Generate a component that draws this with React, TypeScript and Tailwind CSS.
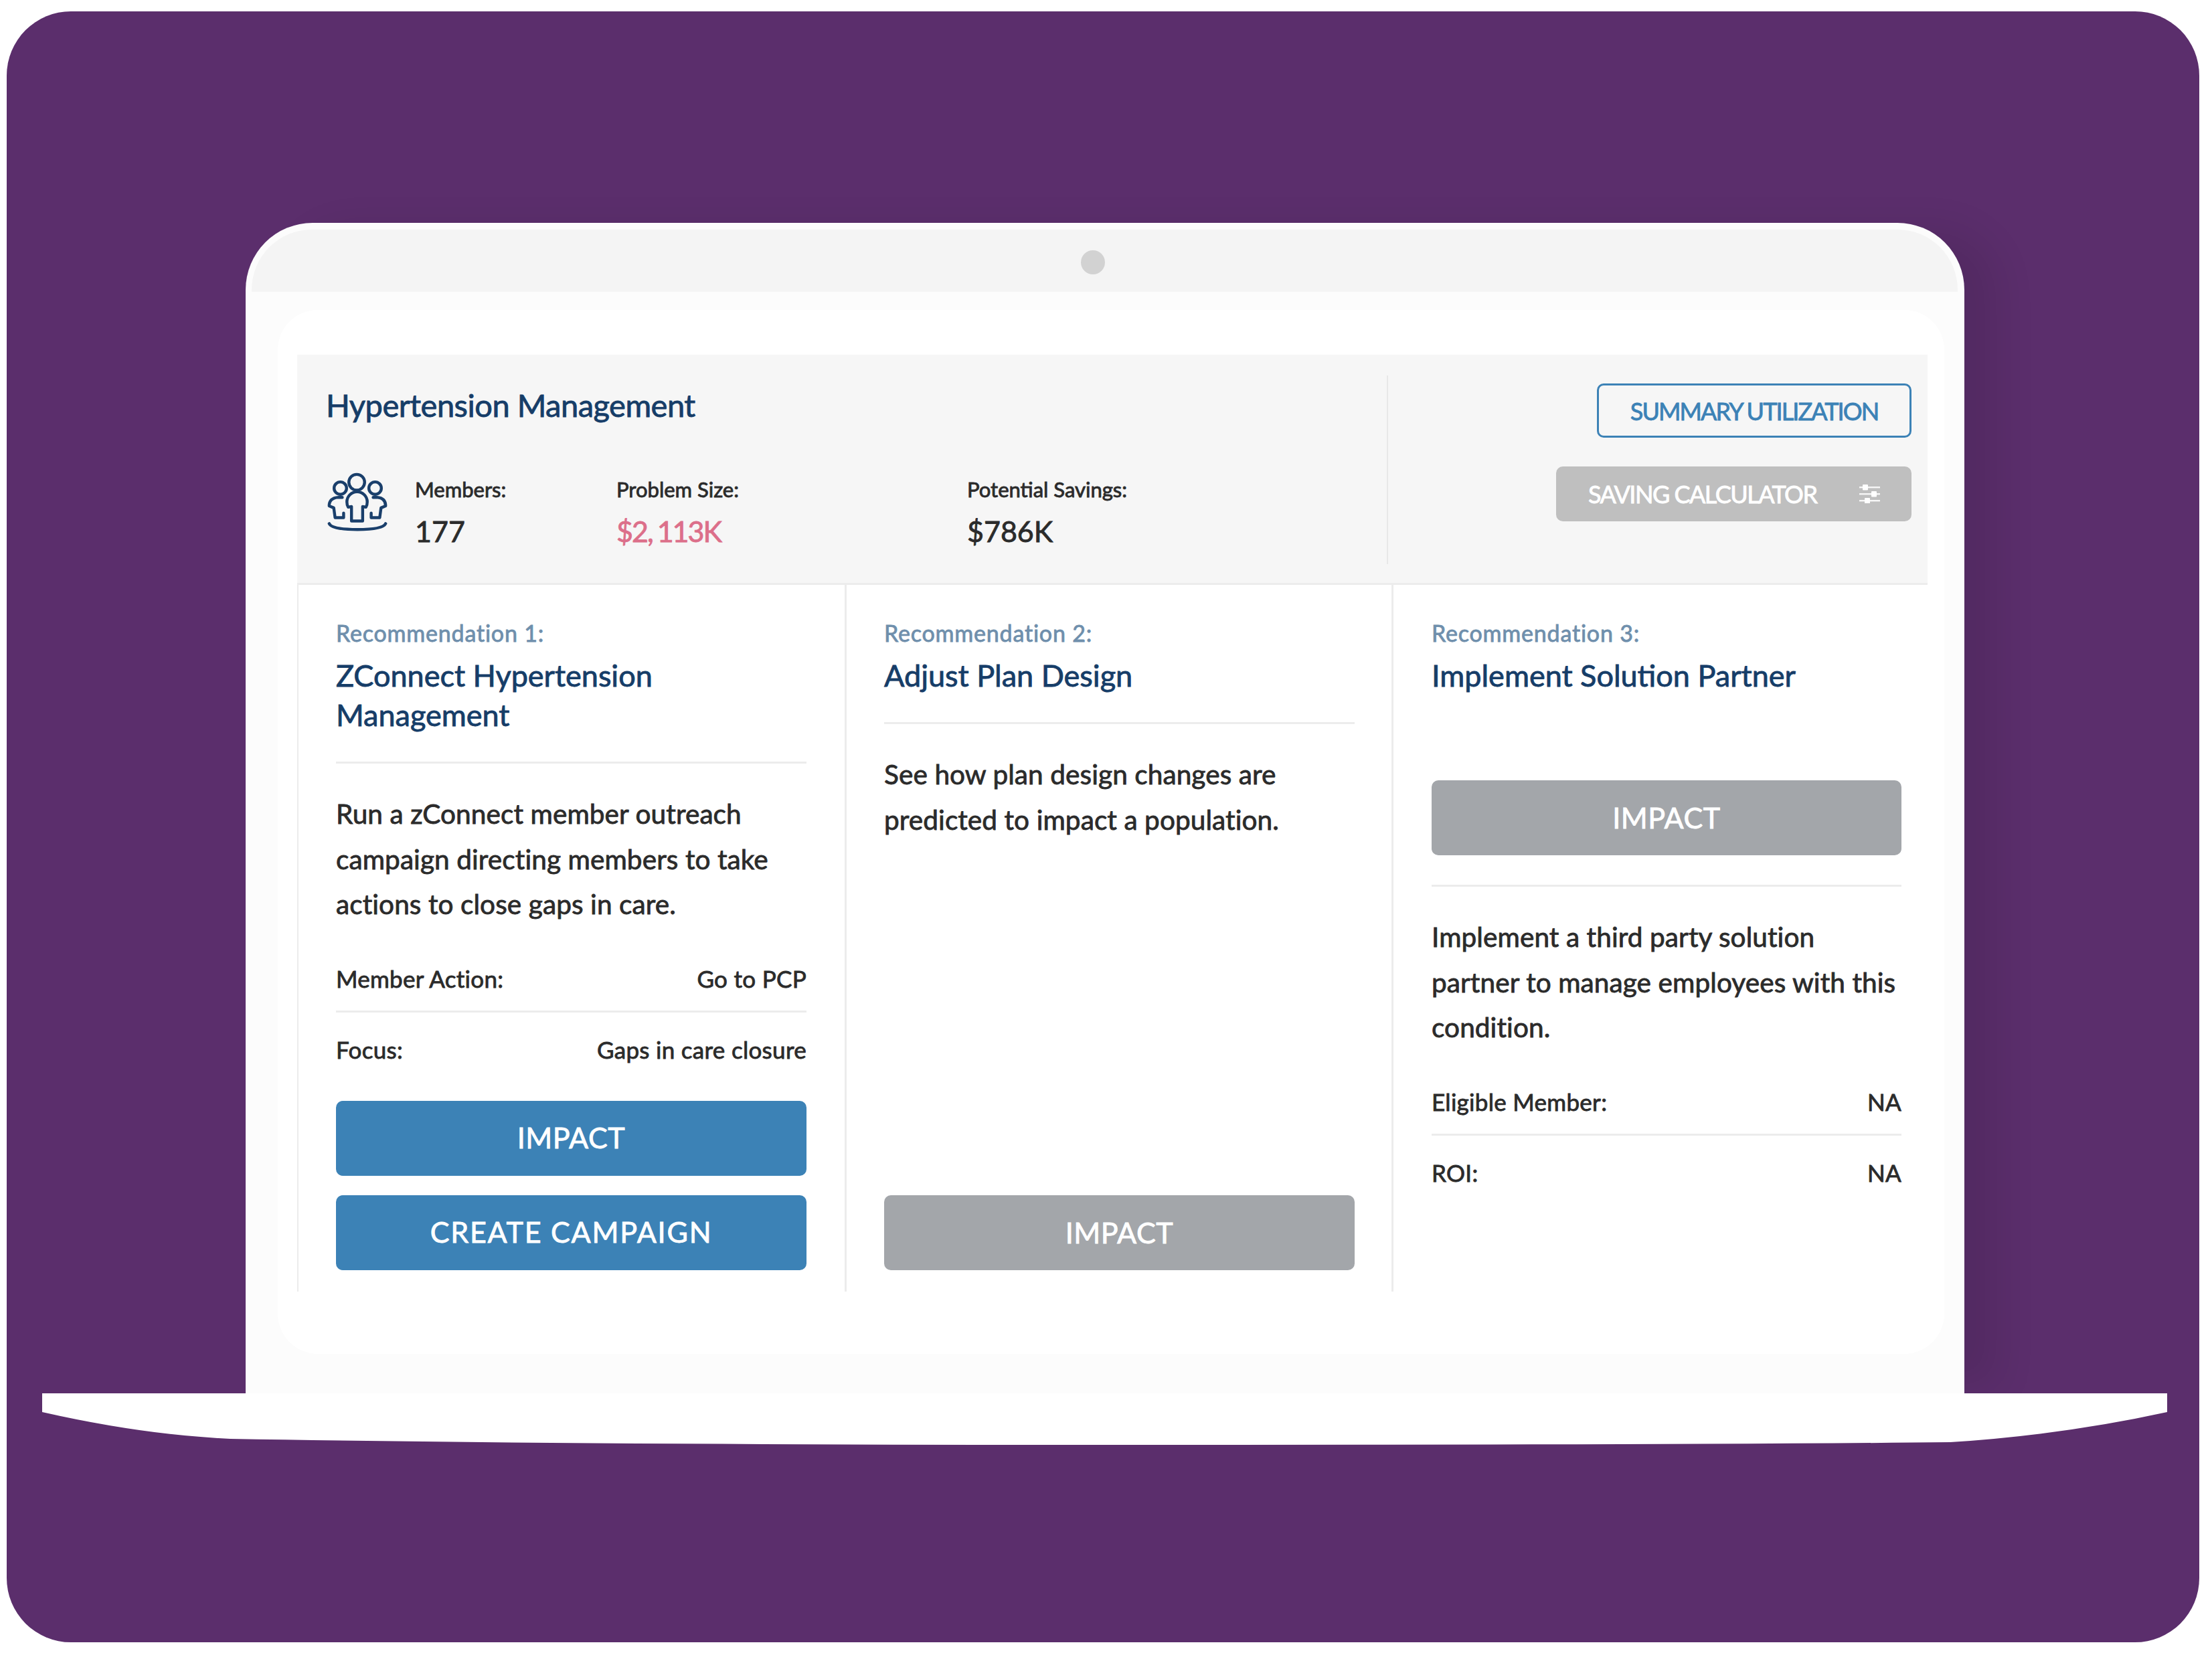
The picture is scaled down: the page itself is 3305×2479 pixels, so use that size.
const font = "font-['Lato','Noto_Sans',sans-serif]";
const heavy = "[-webkit-text-stroke:0.85px_currentColor]";

function PeopleIcon() {
  return (
    <svg width="104" height="102" viewBox="0 0 106 104" fill="none" stroke="#1a3f6b" strokeWidth="4.5" strokeLinecap="round" strokeLinejoin="round" className="-ml-[10px] -mt-[6px] mr-[2px] shrink-0">
      <circle cx="52" cy="20" r="12" />
      <circle cx="27" cy="29" r="9.5" />
      <circle cx="80" cy="29" r="9.5" />
      <path d="M44 79H61V57L66 58Q68 55 68 50A15.5 15.5 0 0 0 37 50Q37 55 39 58L44 57Z" />
      <path d="M30 43H24Q10 44 10 56L17 59L19 74H32V67" />
      <path d="M77 43H83Q96 44 96 56L89 59L87 74H74V67" />
      <path d="M10 83Q14 92 53 92Q92 92 96 83" />
    </svg>
  );
}

function SlidersIcon() {
  return (
    <svg width="32" height="28" viewBox="8 10 32 28" fill="white" className="shrink-0">
      <rect x="8" y="13" width="31" height="2.4" opacity="0.85" />
      <rect x="8" y="23" width="31" height="2.4" opacity="0.85" />
      <rect x="8" y="33" width="31" height="2.4" opacity="0.85" />
      <rect x="13" y="10" width="8" height="8.5" rx="1" />
      <rect x="26" y="20" width="8" height="8.5" rx="1" />
      <rect x="16" y="30" width="8" height="8.5" rx="1" />
    </svg>
  );
}

function Stat({ label, value, cls, width }: { label: string; value: string; cls: string; width: string }) {
  return (
    <div className={width}>
      <div className={`text-[31px] leading-[40px] text-[#2b2b2b] ${heavy}`}>{label}</div>
      <div className={`mt-[21px] text-[43px] leading-[44px] ${heavy} ${cls}`}>{value}</div>
    </div>
  );
}

function ActionButton({ label, gray, wide }: { label: string; gray?: boolean; wide?: boolean }) {
  return (
    <div className={`h-[112px] rounded-[10px] flex items-center justify-center text-white text-[43px] ${wide ? "tracking-[1.8px]" : "tracking-[0.6px]"} ${heavy} ${gray ? "bg-[#a3a6aa]" : "bg-[#3c82b6]"}`}>
      {label}
    </div>
  );
}

function Heading({ n, title }: { n: number; title: string }) {
  return (
    <>
      <div className={`text-[34px] leading-[44px] text-[#6f8fac] tracking-[0.8px] ${heavy}`}>Recommendation {n}:</div>
      <div className={`mt-[12px] text-[45px] leading-[59px] text-[#163d68] ${heavy}`}>{title}</div>
    </>
  );
}

function Body({ children }: { children: React.ReactNode }) {
  return <p className={`text-[40.5px] leading-[67.5px] tracking-[0.1px] text-[#2b2b2b] ${heavy}`}>{children}</p>;
}

function Row({ k, v, line }: { k: string; v: string; line?: boolean }) {
  return (
    <div className={`flex justify-between items-center text-[35px] tracking-[0.3px] text-[#2b2b2b] ${heavy} ${line ? "h-[84px] border-b-[3px] border-[#ececec] pb-[14px]" : "h-[112px]"}`}>
      <span>{k}</span>
      <span>{v}</span>
    </div>
  );
}

export default function App() {
  return (
    <div className={`w-[3305px] h-[2479px] bg-white pl-[10px] pt-[17px] ${font}`}>
      <div className="w-[3276px] h-[2437px] bg-[#5b2e6c] rounded-[96px] pt-[316px] overflow-hidden">
        <div className="ml-[357px] w-[2568px] h-[1749px] bg-[#fcfcfc] rounded-t-[100px] pt-[10px] pl-[9px] pr-[10px] shadow-[60px_0_60px_-10px_rgba(0,0,0,0.09)]">
          <div className="h-[93px] bg-[#f4f4f4] rounded-t-[90px] flex items-center justify-center pr-[36px]">
            <div className="w-[36px] h-[36px] rounded-full bg-[#d2d2d2] mt-[4px]" />
          </div>
          <div className="ml-[39px] mt-[27px] w-[2490px] h-[1560px] bg-white rounded-[60px] pt-[67px] pl-[29px]">
            <div className="w-[2436px]">
              <div className="h-[344px] bg-[#f6f6f6] border-b-[3px] border-[#ececec] flex pl-[43px]">
                <div className="flex-1 pt-[50px]">
                  <h1 className={`text-[47px] leading-[50px] tracking-[-0.5px] text-[#163d68] ${heavy}`}>Hypertension Management</h1>
                  <div className="flex mt-[77px] pl-[5px]">
                    <PeopleIcon />
                    <div className="flex ml-[32px] pt-[4px]">
                      <Stat label="Members:" value="177" cls="text-[#2b2b2b]" width="w-[301px]" />
                      <Stat label="Problem Size:" value="$2, 113K" cls="text-[#dc6f8a] tracking-[-2px] [word-spacing:-2px]" width="w-[524px]" />
                      <Stat label="Potential Savings:" value="$786K" cls="text-[#2b2b2b]" width="w-[300px]" />
                    </div>
                  </div>
                </div>
                <div className="w-[808px] h-[282px] mt-[31px] border-l-[2px] border-[#e8e8e8] flex flex-col items-end pr-[24px] pt-[12px]">
                  <div className={`h-[81px] w-[470px] rounded-[10px] border-[3px] border-[#3c82b6] text-[#3c82b6] text-[36px] tracking-[-1.9px] flex items-center justify-center ${heavy}`}>SUMMARY UTILIZATION</div>
                  <div className={`mt-[43px] h-[82px] w-[531px] rounded-[10px] bg-[#bfbfbf] text-white text-[36px] tracking-[-1.5px] flex items-center pl-[48px] pr-[46px] justify-between ${heavy}`}>
                    <span>SAVING CALCULATOR</span>
                    <SlidersIcon />
                  </div>
                </div>
              </div>
              <div className="grid grid-cols-[821px_817px_798px] h-[1056px]">
                <div className="border-l-[2px] border-r-[3px] border-[#ececec] pl-[56px] pr-[57px] pt-[50px] flex flex-col">
                  <Heading n={1} title="ZConnect Hypertension Management" />
                  <div className="mt-[40px] border-t-[3px] border-[#ececec]" />
                  <div className="mt-[41px]"><Body>Run a zConnect member outreach campaign directing members to take actions to close gaps in care.</Body></div>
                  <div className="mt-[44px]">
                    <Row k="Member Action:" v="Go to PCP" line />
                    <Row k="Focus:" v="Gaps in care closure" />
                  </div>
                  <div className="mt-[20px]"><ActionButton label="IMPACT" /></div>
                  <div className="mt-[29px]"><ActionButton label="CREATE CAMPAIGN" wide /></div>
                </div>
                <div className="border-r-[3px] border-[#ececec] pl-[56px] pr-[55px] pt-[50px] flex flex-col">
                  <Heading n={2} title="Adjust Plan Design" />
                  <div className="mt-[40px] border-t-[3px] border-[#ececec]" />
                  <div className="mt-[41px]"><Body>See how plan design changes are predicted to impact a population.</Body></div>
                  <div className="mt-[528px]"><ActionButton label="IMPACT" gray /></div>
                </div>
                <div className="pl-[57px] pr-[39px] pt-[50px] flex flex-col">
                  <Heading n={3} title="Implement Solution Partner" />
                  <div className="mt-[127px]"><ActionButton label="IMPACT" gray /></div>
                  <div className="mt-[44px] border-t-[3px] border-[#ececec]" />
                  <div className="mt-[41px]"><Body>Implement a third party solution partner to manage employees with this condition.</Body></div>
                  <div className="mt-[44px]">
                    <Row k="Eligible Member:" v="NA" line />
                    <Row k="ROI:" v="NA" />
                  </div>
                </div>
              </div>
            </div>
          </div>
        </div>
        <svg width="3175" height="77" viewBox="0 0 3175 77" className="ml-[53px] block">
          <path d="M0 0H3175V28Q3020 62 2851 73Q2500 77 1587 77Q800 77 281 68Q150 62 0 28Z" fill="#ffffff" />
        </svg>
      </div>
    </div>
  );
}
